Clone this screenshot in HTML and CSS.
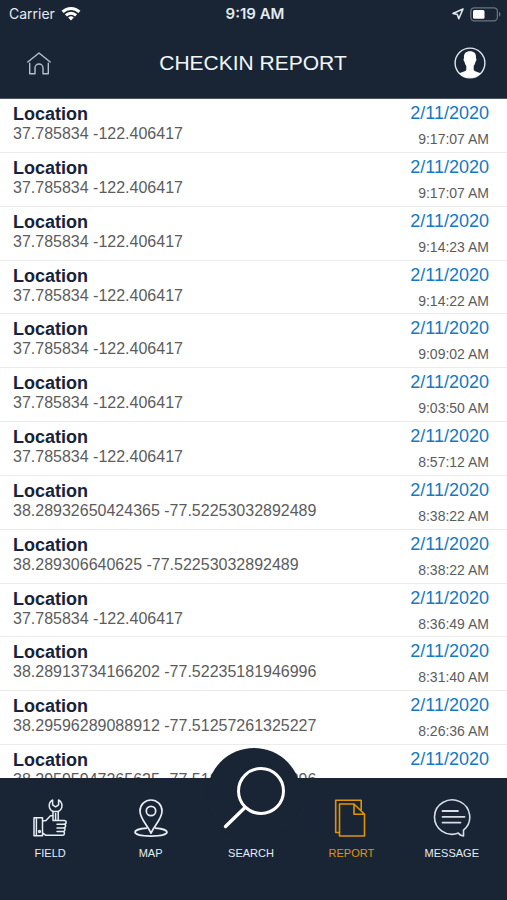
FILE: index.html
```html
<!DOCTYPE html>
<html lang="en">
<head>
<meta charset="utf-8">
<meta name="viewport" content="width=device-width, initial-scale=1">
<title>Checkin Report</title>
<link rel="stylesheet" href="styles.css">
</head>
<body>
<div class="status">
  <div class="status-left">
    <span>Carrier</span>
    <svg width="20" height="16" viewBox="0 0 20 16" fill="none" stroke="#fff" stroke-width="3"><path d="M1.6 5.9a12 12 0 0 1 16.8 0M4.9 9.4a7.3 7.3 0 0 1 10.2 0"/><path d="M10 14.4 7.2 11.6a4 4 0 0 1 5.6 0z" fill="#fff" stroke="none"/></svg>
  </div>
  <span class="clock">9:19 AM</span>
  <div class="status-right">
    <svg width="12" height="12" viewBox="0 0 12 12" fill="none" stroke="#dfe6ec" stroke-width="1.6" stroke-linejoin="round"><path d="M11 1 1 5.400l4.300 1.100 1.500 4.300z"/></svg>
    <svg width="31" height="15" viewBox="0 0 31 15"><rect x=".8" y=".8" width="26.6" height="13" rx="3.5" fill="none" stroke="#6a7480" stroke-width="1.3"/><rect x="3" y="3" width="11.5" height="8.7" rx="1.5" fill="#fff"/><path d="M29 5c2 .7 2 4 0 4.700z" fill="#6a7480"/></svg>
  </div>
</div>
<header class="header">
  <button class="icon-button" type="button" aria-label="Home">
    <svg width="26" height="24" viewBox="0 0 26 24" fill="none" stroke="#b4c0cd" stroke-width="1.400" stroke-linejoin="round" stroke-linecap="round"><path d="M1.800 11 13 2l11.200 9M3.700 12.200v10.600h5.300v-5.800a4 4 0 0 1 8 0v5.800h5.300V12.200"/></svg>
  </button>
  <h1>CHECKIN REPORT</h1>
  <button class="icon-button" type="button" aria-label="Profile">
    <svg width="32" height="32" viewBox="0 0 32 32"><circle cx="16" cy="16" r="14.900" fill="none" stroke="#dfe8ef" stroke-width="1.400"/><path d="M16 4.300c4.400 0 6.400 2.600 6 7 .8.400.5 3-.6 3.600-.3 1.800-1 3-1.700 3.900v4.200c.8 1.600 5 2 7 3.500A14.400 14.400 0 0 1 16 30.700a14.400 14.400 0 0 1-10.700-4.200c2-1.500 6.200-1.900 7-3.500v-4.200c-.7-.9-1.400-2.100-1.700-3.900-1.100-.6-1.400-3.200-.6-3.600-.4-4.400 1.600-7 6-7z" fill="#fff"/></svg>
  </button>
</header>
<main class="report">
  <ul class="list">
    <li><h2>Location</h2><time>2/11/2020</time><p>37.785834 -122.406417</p><small>9:17:07 AM</small></li>
    <li><h2>Location</h2><time>2/11/2020</time><p>37.785834 -122.406417</p><small>9:17:07 AM</small></li>
    <li><h2>Location</h2><time>2/11/2020</time><p>37.785834 -122.406417</p><small>9:14:23 AM</small></li>
    <li><h2>Location</h2><time>2/11/2020</time><p>37.785834 -122.406417</p><small>9:14:22 AM</small></li>
    <li><h2>Location</h2><time>2/11/2020</time><p>37.785834 -122.406417</p><small>9:09:02 AM</small></li>
    <li><h2>Location</h2><time>2/11/2020</time><p>37.785834 -122.406417</p><small>9:03:50 AM</small></li>
    <li><h2>Location</h2><time>2/11/2020</time><p>37.785834 -122.406417</p><small>8:57:12 AM</small></li>
    <li><h2>Location</h2><time>2/11/2020</time><p>38.28932650424365 -77.52253032892489</p><small>8:38:22 AM</small></li>
    <li><h2>Location</h2><time>2/11/2020</time><p>38.289306640625 -77.52253032892489</p><small>8:38:22 AM</small></li>
    <li><h2>Location</h2><time>2/11/2020</time><p>37.785834 -122.406417</p><small>8:36:49 AM</small></li>
    <li><h2>Location</h2><time>2/11/2020</time><p>38.28913734166202 -77.52235181946996</p><small>8:31:40 AM</small></li>
    <li><h2>Location</h2><time>2/11/2020</time><p>38.29596289088912 -77.51257261325227</p><small>8:26:36 AM</small></li>
    <li><h2>Location</h2><time>2/11/2020</time><p>38.29595947265625 -77.51257261325296</p></li>
  </ul>
</main>
<nav class="tabs">
  <button class="tab" type="button">
    <svg width="34" height="40" viewBox="0 0 34 40" fill="none" stroke="#e6edf4" stroke-width="1.500" stroke-linejoin="round" stroke-linecap="round"><path d="M1 19.800h8.500v18H1zM3.400 19.800v18M9.500 23l3.500-.5 4.500-4.700h2.200M9.500 35l3.500 2.300h16.500c2.500 0 2.500-3.700.4-3.700 2.700 0 2.700-3.700.6-3.700 2.700 0 2.700-3.700.6-3.700 2.700 0 2.700-3.700 0-3.700H20V13.500M25.200 21.800v-8.300M22.600 15.500v6.300M24 26.200h7M24 29.900h6.500M24 33.600h5.900"/><path d="M19.600 2v4.800l3 2 3-2V2c4.600 2.400 4.500 9.300-.4 11.500h-5.200c-4.900-2.200-5-9.100-.4-11.500z"/><circle cx="6.500" cy="33.500" r=".9"/></svg>
    <span>FIELD</span>
  </button>
  <button class="tab" type="button">
    <svg width="34" height="40" viewBox="0 0 34 40" fill="none" stroke="#e6edf4" stroke-width="1.700" stroke-linejoin="round"><path d="M17 35.200C13.500 27 6 21 6 13a11 11 0 0 1 22 0c0 8-7.500 14-11 22.200z"/><circle cx="17" cy="13" r="4.700"/><path d="M13 30.200c-7 .4-12 2-12 3.900 0 2.300 6.600 4 16 4s16-1.700 16-4c0-1.900-5-3.500-12-3.900"/></svg>
    <span>MAP</span>
  </button>
  <button class="tab" type="button">
    <span class="bump"><svg width="62" height="64" viewBox="0 0 62 64" fill="none" stroke="#fff" stroke-linecap="round"><circle cx="38" cy="25" r="22.500" stroke-width="3"/><path d="M22 41.500 2.500 60.500" stroke-width="3.400"/></svg></span>
    <span>SEARCH</span>
  </button>
  <button class="tab active" type="button" aria-current="page">
    <svg width="34" height="40" viewBox="0 0 34 40" fill="none" stroke="#e0930f" stroke-width="1.600" stroke-linejoin="round"><path d="M5.500 34.500H1.700V2.200h25.500v10M20 6H5.500v32h25V16.200zv10.200h10.500"/></svg>
    <span>REPORT</span>
  </button>
  <button class="tab" type="button">
    <svg width="38" height="40" viewBox="0 0 38 40" fill="none" stroke="#d5dde6" stroke-width="1.600" stroke-linejoin="round"><path d="M25.500 35.100A17.600 17.200 0 1 1 30.500 32.200V38c-2.400-.4-4.200-1.400-5-2.900z"/><path d="M9.500 13H25M9.500 18.800h22M9.500 24.600H27.500" stroke-width="1.800" stroke-linecap="round"/></svg>
    <span>MESSAGE</span>
  </button>
</nav>
</body>
</html>
```
FILE: styles.css
```css
* {
  box-sizing: border-box;
  margin: 0;
  padding: 0;
}

body {
  display: flex;
  flex-direction: column;
  height: 100vh;
  overflow: hidden;
  background: #fff;
  font-family: "Liberation Sans", Arial, sans-serif;
}

button {
  border: 0;
  background: none;
  color: inherit;
  font: inherit;
  cursor: pointer;
}

svg {
  display: block;
}

.status {
  display: grid;
  grid-template-columns: 1fr auto 1fr;
  align-items: center;
  height: 28px;
  padding: 0 6px 0 9px;
  background: #192534;
  color: #e4eaf0;
  font: 14px/28px Inter, sans-serif;
}

.status-left,
.status-right {
  display: flex;
  align-items: center;
  gap: 6px;
}

.status-right {
  justify-content: flex-end;
}

.clock {
  font-size: 15px;
  font-weight: 600;
}

.header {
  display: flex;
  align-items: center;
  justify-content: space-between;
  height: 71px;
  padding: 0 21px 0 26px;
  border-bottom: 1px solid #4a5566;
  background: #192534;
  color: #f3f7fa;
}

.header h1 {
  font-size: 21px;
  font-weight: 400;
  line-height: 24px;
}

.report {
  flex: 1;
  min-height: 0;
  margin-bottom: -21px;
}

.list {
  display: grid;
  grid-auto-rows: 1fr;
  height: 100%;
  list-style: none;
}

.list li {
  display: grid;
  grid-template-columns: 1fr auto;
  grid-template-rows: 24px 24px;
  padding: 3px 18px 0 13px;
  border-bottom: 1px solid #e9ebec;
}

.list h2 {
  color: #17233a;
  font-size: 18px;
  line-height: 25px;
}

.list time {
  color: #1479c2;
  font-size: 18px;
  line-height: 22px;
  text-align: right;
}

.list p {
  color: #5c5c5c;
  font-size: 16px;
  line-height: 16px;
}

.list small {
  color: #5c5c5c;
  font-size: 14px;
  line-height: 26px;
  text-align: right;
}

.tabs {
  position: relative;
  display: grid;
  grid-template-columns: repeat(5, 1fr);
  flex-shrink: 0;
  height: 122px;
  padding-right: 5px;
  background: #192534;
  color: #e6edf4;
  font-size: 11px;
  line-height: 14px;
}

.tab {
  display: flex;
  flex-direction: column;
  align-items: center;
  justify-content: flex-end;
  gap: 8px;
  padding-bottom: 40px;
}

.tab.active {
  color: #e0930f;
}

.bump {
  position: absolute;
  top: -30px;
  left: 50%;
  display: flex;
  justify-content: center;
  width: 94px;
  height: 94px;
  margin-left: -47px;
  padding-top: 18px;
  border-radius: 50%;
  background: #192534;
}
```
